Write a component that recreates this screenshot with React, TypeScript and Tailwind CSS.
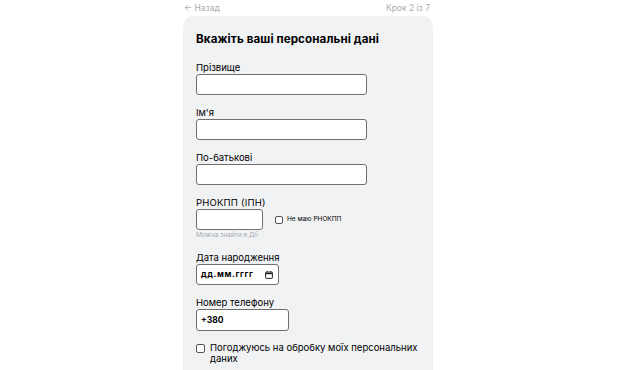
import React from "react";

const fields = ["Прізвище", "Ім'я", "По-батькові"];

const Box = ({ className = "" }: { className?: string }) => (
  <span
    className={`inline-block shrink-0 rounded-[2px] border border-[#555] bg-white ${className}`}
  />
);

const CalendarIcon = () => (
  <svg width="8" height="8" viewBox="0 0 8 8" fill="none" className="shrink-0">
    <rect x="0.6" y="1.1" width="6.8" height="6.3" rx="0.6" stroke="#222" strokeWidth="1" />
    <line x1="0.6" y1="2.6" x2="7.4" y2="2.6" stroke="#222" strokeWidth="1.2" />
    <line x1="2.2" y1="0" x2="2.2" y2="1.6" stroke="#222" strokeWidth="1" />
    <line x1="5.8" y1="0" x2="5.8" y2="1.6" stroke="#222" strokeWidth="1" />
  </svg>
);

export default function App() {
  return (
    <div className="h-[370px] w-full overflow-hidden bg-white font-['Inter',sans-serif] text-black">
      <div className="ml-[183px] w-[250px]">
        {/* top bar */}
        <div className="flex h-[16px] items-center justify-between pl-[1px] pr-[3px] text-[8.5px] text-[#a8acb2]">
          <span>← Назад</span>
          <span>Крок 2 із 7</span>
        </div>

        <div className="rounded-[10px] bg-[#f1f2f4] px-[13px] pb-[20px] pt-[15px]">
          <h1 className="text-[11.6px] font-bold leading-[16px] tracking-[0.1px]">Вкажіть ваші персональні дані</h1>

          <div className="mt-[14px] flex flex-col gap-[11px]">
            {fields.map((f) => (
              <div key={f}>
                <div className="text-[9.5px] leading-[13px]">{f}</div>
                <div className="h-[21px] w-[171px] rounded-[3px] border border-[#6f6f6f] bg-white" />
              </div>
            ))}

            {/* РНОКПП */}
            <div>
              <div className="text-[9.5px] leading-[13px] tracking-[0.2px]">РНОКПП (ІПН)</div>
              <div className="flex items-center">
                <div className="h-[21px] w-[67px] rounded-[3px] border border-[#6f6f6f] bg-white" />
                <Box className="ml-[12px] h-[8px] w-[8px]" />
                <span className="ml-[4px] text-[6.5px]">Не маю РНОКПП</span>
              </div>
              <div className="mt-[1px] text-[6.5px] leading-[9px] text-[#a8acb2]">Можна знайти в Дії</div>
            </div>

            {/* date */}
            <div>
              <div className="text-[9.5px] leading-[13px]">Дата народження</div>
              <div className="flex h-[21px] w-[83px] items-center justify-between rounded-[3px] border border-[#6f6f6f] bg-white pl-[4px] pr-[5px]">
                <span className="text-[8.5px] font-bold tracking-[0.6px]">дд.мм.гггг</span>
                <CalendarIcon />
              </div>
            </div>

            {/* phone */}
            <div>
              <div className="text-[9.5px] leading-[13px]">Номер телефону</div>
              <div className="flex h-[22px] w-[93px] items-center rounded-[3px] border border-[#6f6f6f] bg-white pl-[4px]">
                <span className="text-[8.5px] font-bold">+380</span>
              </div>
            </div>

            {/* consent */}
            <div className="mt-[1px] flex items-start">
              <Box className="mt-[1px] h-[9px] w-[9px]" />
              <span className="ml-[5px] w-[210px] text-[9.5px] leading-[10.5px]">
                Погоджуюсь на обробку моїх персональних даних
              </span>
            </div>
          </div>
        </div>
      </div>
    </div>
  );
}
